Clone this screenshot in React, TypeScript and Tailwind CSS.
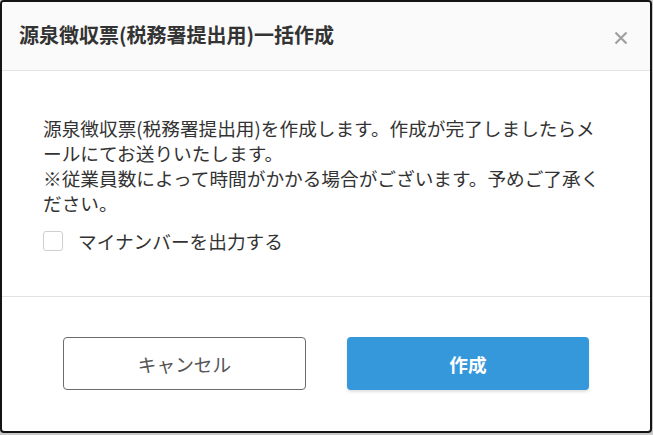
import React from "react";

export default function App() {
  const font = { fontFamily: '"Noto Sans CJK JP", "Noto Sans", sans-serif' };
  return (
    <div className="w-[653px] h-[435px] bg-[#c8c8c8] overflow-hidden" style={font}>
      <div className="w-[652px] h-[433px] border-2 border-[#141414] rounded-[4px] bg-white flex flex-col overflow-hidden">
        <div className="h-[69px] shrink-0 bg-[#fafafa] border-b border-[#e2e2e2] flex items-center justify-between pl-[17px] pr-[22px]">
          <div className="text-[20px] font-bold text-[#333] leading-none mt-[-2px]">
            源泉徴収票(税務署提出用)一括作成
          </div>
          <svg width="14" height="14" viewBox="0 0 14 14" className="mt-[4px]">
            <path d="M1.5 1.5 L12.5 12.5 M12.5 1.5 L1.5 12.5" stroke="#a0a0a0" strokeWidth="2.2" strokeLinecap="butt" />
          </svg>
        </div>
        <div className="shrink-0 h-[226px] border-b border-[#e2e2e2] pl-[41px] pt-[44px]">
          <p className="text-[18.67px] leading-[25px] text-[#333] whitespace-nowrap">
            源泉徴収票(税務署提出用)を作成します。作成が完了しましたらメ
            <br />
            ールにてお送りいたします。
            <br />
            ※従業員数によって時間がかかる場合がございます。予めご了承く
            <br />
            ださい。
          </p>
          <label className="mt-[13px] flex items-center h-[25px]">
            <span className="w-[20px] h-[20px] border border-[#cfcfcf] rounded-[3px] bg-white shrink-0" />
            <span className="ml-[15px] text-[18.67px] leading-[25px] text-[#333]">マイナンバーを出力する</span>
          </label>
        </div>
        <div className="flex-1 flex items-center justify-center gap-[41px] pb-[1px]">
          <button className="w-[243px] h-[53px] border border-[#6b6b6b] rounded-[4px] bg-white text-[18.67px] text-[#555]">
            キャンセル
          </button>
          <button className="w-[242px] h-[53px] rounded-[4px] bg-[#3598db] text-[18.67px] font-bold text-white shadow-[0_2px_3px_rgba(0,0,0,0.12)]">
            作成
          </button>
        </div>
      </div>
    </div>
  );
}
